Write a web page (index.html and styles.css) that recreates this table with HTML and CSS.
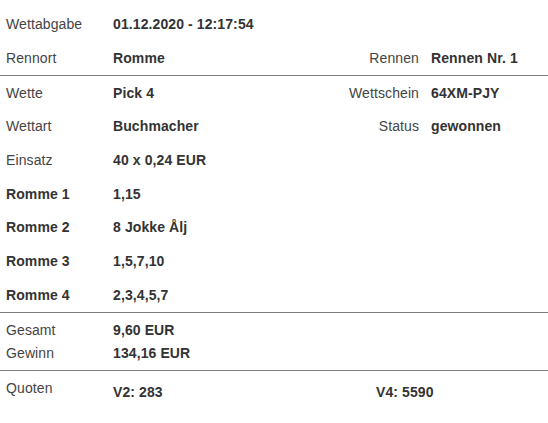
FILE: index.html
```html
<!DOCTYPE html>
<html lang="de">
<head>
<meta charset="utf-8">
<title>Wettschein</title>
<link rel="stylesheet" href="styles.css">
</head>
<body>
<div class="sheet">
  <div class="group first">
    <div class="row"><span class="lbl">Wettabgabe</span><span class="val">01.12.2020 - 12:17:54</span></div>
    <div class="row"><span class="lbl">Rennort</span><span class="val">Romme</span><span class="lbl right">Rennen</span><span class="val">Rennen Nr. 1</span></div>
  </div>
  <div class="group">
    <div class="row"><span class="lbl">Wette</span><span class="val">Pick 4</span><span class="lbl right">Wettschein</span><span class="val">64XM-PJY</span></div>
    <div class="row"><span class="lbl">Wettart</span><span class="val">Buchmacher</span><span class="lbl right">Status</span><span class="val">gewonnen</span></div>
    <div class="row"><span class="lbl">Einsatz</span><span class="val">40 x 0,24 EUR</span></div>
    <div class="row"><span class="lbl strong">Romme 1</span><span class="val">1,15</span></div>
    <div class="row"><span class="lbl strong">Romme 2</span><span class="val">8 Jokke Ålj</span></div>
    <div class="row"><span class="lbl strong">Romme 3</span><span class="val">1,5,7,10</span></div>
    <div class="row"><span class="lbl strong">Romme 4</span><span class="val">2,3,4,5,7</span></div>
  </div>
  <div class="group totals">
    <div class="row small"><span class="lbl">Gesamt</span><span class="val">9,60 EUR</span></div>
    <div class="row small"><span class="lbl">Gewinn</span><span class="val">134,16 EUR</span></div>
  </div>
  <div class="group last">
    <div class="row quoten"><span class="lbl">Quoten</span>
      <div class="odds"><span class="odd">V2: 283</span><span class="odd">V4: 5590</span></div>
    </div>
  </div>
</div>
</body>
</html>
```

FILE: styles.css
```css
html, body {
  margin: 0;
  padding: 0;
  background: #ffffff;
}
body {
  font-family: "Liberation Sans", Arial, sans-serif;
  font-size: 14px;
  letter-spacing: 0.1px;
  color: #333333;
}
.sheet {
  width: 548px;
}
.group {
  border-bottom: 1px solid #7c7c7c;
}
.group.first {
  padding-top: 7.5px;
}
.group.last {
  border-bottom: none;
}
.group.totals {
  padding: 6px 0 5px;
}
.row {
  display: grid;
  grid-template-columns: 107px 1fr auto 117px;
  align-items: center;
  padding-left: 6px;
  height: 33.7px;
}
.row.small {
  height: 23px;
}
.lbl {
  color: #444444;
}
.lbl.strong {
  font-weight: bold;
  color: #333333;
}
.lbl.right {
  text-align: right;
  padding-right: 12px;
}
.val {
  font-weight: bold;
  color: #333333;
}
.row.quoten {
  height: 34px;
}
.odds {
  grid-column: 2 / 5;
  display: flex;
  padding-top: 9px;
}
.odd {
  font-weight: bold;
  color: #333333;
}
.odd:first-child {
  width: 263px;
}
```
